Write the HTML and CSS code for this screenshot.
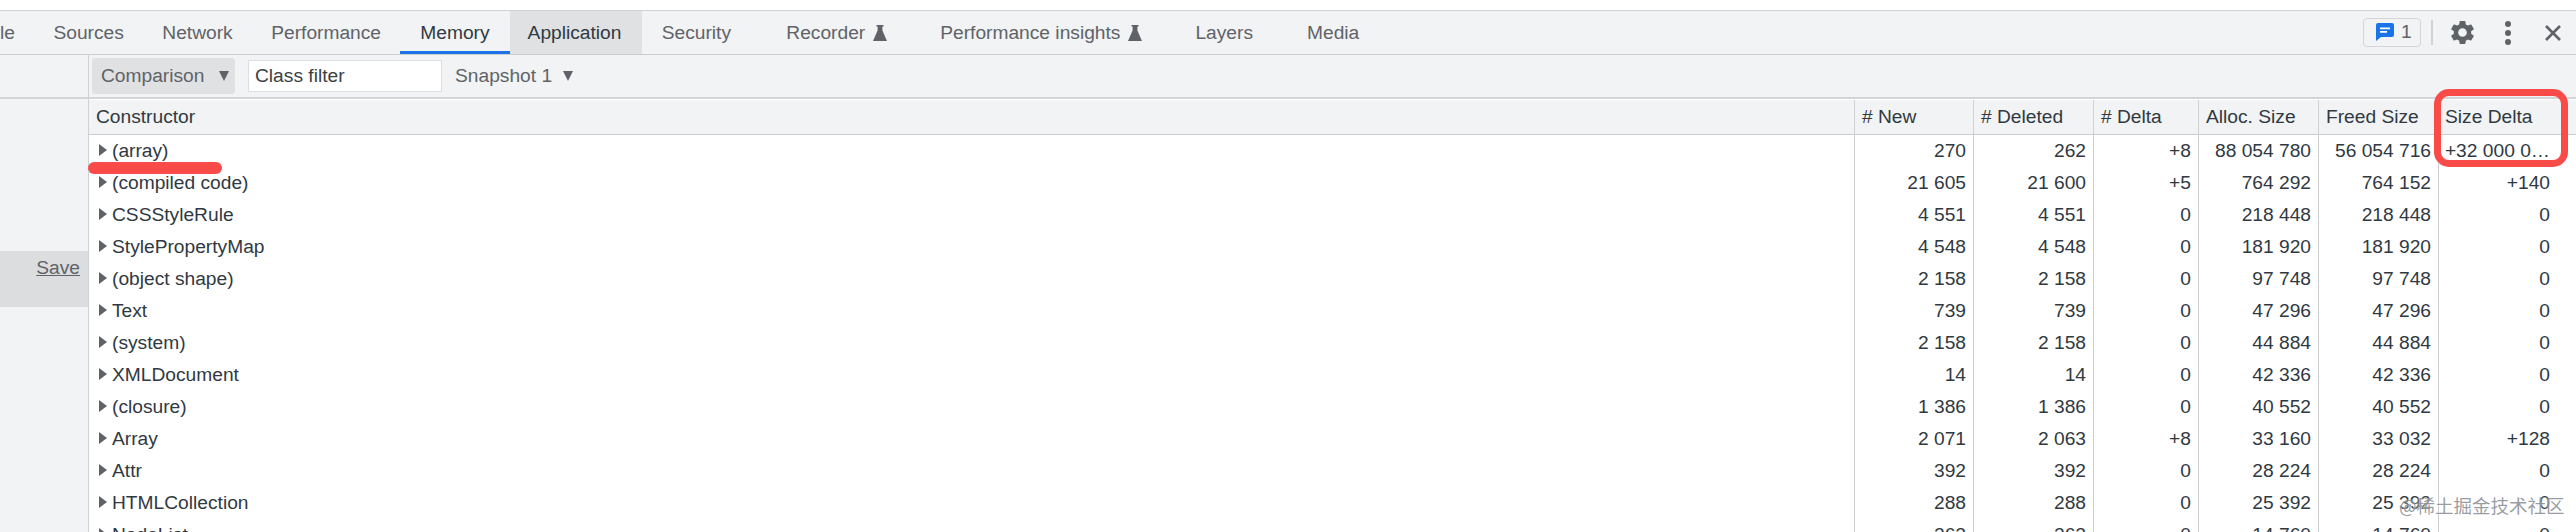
FILE: index.html
```html
<!DOCTYPE html>
<html lang="en">
<head>
<meta charset="utf-8">
<title>DevTools Memory</title>
<link rel="stylesheet" href="styles.css">
</head>
<body>
<div class="page">
  <div class="top-gap"></div>
  <header class="tabbar">
    <nav class="tabs">
      <span class="tab tab-cut">le</span>
      <span class="tab">Sources</span>
      <span class="tab">Network</span>
      <span class="tab">Performance</span>
      <span class="tab tab-current">Memory</span>
      <span class="tab tab-hover">Application</span>
      <span class="tab">Security</span>
      <span class="tab tab-wide tab-recorder">Recorder<svg class="flask" viewBox="0 0 14 16"><path d="M3.500 0h7v1.400H9.400v4.200L14 16H0L4.600 5.600V1.400H3.500z"/></svg></span>
      <span class="tab tab-wide">Performance insights<svg class="flask" viewBox="0 0 14 16"><path d="M3.500 0h7v1.400H9.400v4.200L14 16H0L4.600 5.600V1.400H3.500z"/></svg></span>
      <span class="tab tab-wide">Layers</span>
      <span class="tab tab-wide tab-media">Media</span>
    </nav>
    <div class="actions">
      <div class="issues">
        <svg class="issues-icon" viewBox="0 0 18 18"><path d="M2 0h14a2 2 0 0 1 2 2v10a2 2 0 0 1-2 2H5l-5 4V2a2 2 0 0 1 2-2z"/><path class="issues-lines" d="M4 4.500h10v1.800H4zM4 8h7v1.800H4z"/></svg>
        <span>1</span>
      </div>
      <span class="divider"></span>
      <svg class="gear" viewBox="0 0 24 24"><path d="M19.140 12.940c.04-.3.06-.61.06-.94 0-.32-.02-.64-.07-.94l2.030-1.580c.18-.14.23-.41.12-.61l-1.920-3.320c-.12-.22-.37-.29-.59-.22l-2.390.96c-.5-.38-1.030-.7-1.620-.94l-.36-2.540c-.04-.24-.24-.41-.48-.41h-3.840c-.24 0-.43.17-.47.41l-.36 2.540c-.59.24-1.130.57-1.620.94l-2.390-.96c-.22-.08-.47 0-.59.22L2.740 8.870c-.12.21-.08.47.12.61l2.030 1.580c-.05.3-.09.63-.09.94s.02.64.07.94l-2.030 1.580c-.18.14-.23.41-.12.61l1.920 3.320c.12.22.37.29.59.22l2.390-.96c.5.38 1.030.7 1.620.94l.36 2.540c.05.24.24.41.48.41h3.840c.24 0 .44-.17.47-.41l.36-2.540c.59-.24 1.130-.56 1.620-.94l2.390.96c.22.08.47 0 .59-.22l1.920-3.320c.12-.22.07-.47-.12-.61l-2.010-1.580zM12 15.600c-1.980 0-3.600-1.620-3.600-3.600s1.620-3.600 3.600-3.600 3.600 1.620 3.600 3.600-1.620 3.600-3.600 3.600z"/></svg>
      <svg class="dots" viewBox="0 0 8 26"><circle cx="4" cy="4" r="3"/><circle cx="4" cy="13" r="3"/><circle cx="4" cy="22" r="3"/></svg>
      <svg class="close" viewBox="0 0 16 16"><path d="M1 1l14 14M15 1L1 15"/></svg>
    </div>
  </header>

  <div class="toolbar">
    <div class="toolbar-side"></div>
    <div class="toolbar-main">
      <div class="select select-hover">Comparison<span class="caret"></span></div>
      <div class="filter">Class filter</div>
      <div class="select select-plain">Snapshot 1<span class="caret"></span></div>
    </div>
  </div>

  <div class="content">
    <aside class="side">
      <div class="save"><span class="save-link">Save</span></div>
    </aside>
    <main class="grid-wrap">
      <table class="grid">
        <colgroup>
          <col class="c-name"><col class="c-a"><col class="c-b"><col class="c-c"><col class="c-b"><col class="c-b"><col class="c-last">
        </colgroup>
        <thead>
          <tr><th>Constructor</th><th># New</th><th># Deleted</th><th># Delta</th><th>Alloc. Size</th><th>Freed Size</th><th>Size Delta</th></tr>
        </thead>
        <tbody>
          <tr><td class="name">(array)</td><td>270</td><td>262</td><td>+8</td><td>88 054 780</td><td>56 054 716</td><td>+32 000 0…</td></tr>
          <tr><td class="name">(compiled code)</td><td>21 605</td><td>21 600</td><td>+5</td><td>764 292</td><td>764 152</td><td>+140</td></tr>
          <tr><td class="name">CSSStyleRule</td><td>4 551</td><td>4 551</td><td>0</td><td>218 448</td><td>218 448</td><td>0</td></tr>
          <tr><td class="name">StylePropertyMap</td><td>4 548</td><td>4 548</td><td>0</td><td>181 920</td><td>181 920</td><td>0</td></tr>
          <tr><td class="name">(object shape)</td><td>2 158</td><td>2 158</td><td>0</td><td>97 748</td><td>97 748</td><td>0</td></tr>
          <tr><td class="name">Text</td><td>739</td><td>739</td><td>0</td><td>47 296</td><td>47 296</td><td>0</td></tr>
          <tr><td class="name">(system)</td><td>2 158</td><td>2 158</td><td>0</td><td>44 884</td><td>44 884</td><td>0</td></tr>
          <tr><td class="name">XMLDocument</td><td>14</td><td>14</td><td>0</td><td>42 336</td><td>42 336</td><td>0</td></tr>
          <tr><td class="name">(closure)</td><td>1 386</td><td>1 386</td><td>0</td><td>40 552</td><td>40 552</td><td>0</td></tr>
          <tr><td class="name">Array</td><td>2 071</td><td>2 063</td><td>+8</td><td>33 160</td><td>33 032</td><td>+128</td></tr>
          <tr><td class="name">Attr</td><td>392</td><td>392</td><td>0</td><td>28 224</td><td>28 224</td><td>0</td></tr>
          <tr><td class="name">HTMLCollection</td><td>288</td><td>288</td><td>0</td><td>25 392</td><td>25 392</td><td>0</td></tr>
          <tr><td class="name">NodeList</td><td>262</td><td>262</td><td>0</td><td>14 760</td><td>14 760</td><td>0</td></tr>
        </tbody>
      </table>
    </main>
  </div>

  <div class="mark-underline"></div>
  <div class="mark-box"></div>
  <div class="watermark">@稀土掘金技术社区</div>
</div>
</body>
</html>
```
FILE: styles.css
```css
* { box-sizing: border-box; }
html, body { margin: 0; padding: 0; background: #fff; }
body { font-family: "Liberation Sans", Arial, sans-serif; font-size: 19.200px; color: #303942; }
.page { position: relative; width: 2576px; height: 532px; overflow: hidden; display: flex; flex-direction: column; }

.top-gap { height: 10px; flex: none; background: #fff; }

.tabbar { flex: none; height: 45px; display: flex; justify-content: space-between; background: #f1f3f4; border-top: 1.500px solid #cfd1d3; border-bottom: 1.500px solid #cbcdcf; }
.tabs { display: flex; align-items: stretch; color: #5f6368; }
.tab { display: flex; align-items: center; padding: 0 19.250px; white-space: nowrap; }
.tab-cut { padding-left: 0; }
.tab-current { color: #303942; padding: 0 20px; box-shadow: inset 0 -3px 0 #1a73e8; }
.tab-hover { color: #303942; background: #dfe1e3; padding: 0 21px 0 18px; }
.tab-wide { padding: 0 26.500px; }
.tab-recorder { padding-left: 36px; }
.tab-media { padding-left: 27.500px; }
.flask { width: 14px; height: 16px; margin-left: 8px; fill: #5f6368; }

.actions { display: flex; align-items: center; padding-right: 15px; }
.issues { display: flex; align-items: center; height: 29px; width: 58px; padding-left: 12px; gap: 7px; border: 1.500px solid #d3d5d7; border-radius: 4px; color: #5f6368; margin-top: -1px; }
.issues-icon { width: 18px; height: 18px; fill: #1a73e8; }
.issues-lines { fill: #fff; }
.divider { width: 2px; height: 25px; background: #d0d2d4; margin: 0 12px 0 10px; }
.gear { width: 29px; height: 29px; fill: #5f6368; margin-left: 3px; }
.dots { width: 8px; height: 26px; fill: #5f6368; margin-left: 27px; }
.close { width: 16px; height: 16px; margin-left: 33px; stroke: #5f6368; stroke-width: 2.600; fill: none; }

.toolbar { flex: none; height: 44px; display: flex; background: #f1f3f4; border-bottom: 2px solid #d3d5d7; }
.toolbar-side { width: 89px; flex: none; border-right: 1.500px solid #cfd1d3; }
.toolbar-main { display: flex; align-items: center; padding-left: 3px; color: #5f6368; }
.select { display: flex; align-items: center; }
.select-hover { width: 143px; height: 36px; padding-left: 9px; background: #dfe1e3; border-radius: 3px; }
.select-hover .caret { margin-left: 15px; }
.select-plain { margin-left: 13px; }
.select-plain .caret { margin-left: 11px; }
.caret { width: 0; height: 0; border-left: 5px solid transparent; border-right: 5px solid transparent; border-top: 10px solid #5f6368; }
.filter { width: 194px; height: 32px; margin-left: 13px; padding-left: 6px; line-height: 30px; background: #fff; border: 1.500px solid #dcdee0; color: #3c4043; }

.content { flex: 1; display: flex; min-height: 0; padding-top: 1px; }
.side { width: 89px; flex: none; background: #f1f3f4; border-right: 1.500px solid #cfd1d3; padding-top: 152px; margin-top: -1px; }
.save { height: 56px; background: #dcdddf; text-align: right; padding: 6px 8px 0 0; }
.save-link { color: #5f6368; text-decoration: underline; }

.grid-wrap { flex: 1; min-width: 0; overflow: hidden; }
.grid { width: 2487px; table-layout: fixed; border-collapse: separate; border-spacing: 0; }
.c-name { width: 1765px; }
.c-a { width: 119px; }
.c-b { width: 120px; }
.c-c { width: 105px; }
.c-last { width: 138px; }
.grid th { height: 35px; padding: 0 0 0 7px; text-align: left; font-weight: 400; background: #f1f3f4; border-bottom: 1.500px solid #cbcdcf; border-left: 1px solid #d0d2d4; white-space: nowrap; overflow: hidden; }
.grid th:first-child { border-left: 0; }
.grid th:last-child { padding-left: 6px; }
.grid td { height: 32px; padding: 0 7px 0 0; text-align: right; border-left: 1px solid #cfcfcf; white-space: nowrap; overflow: hidden; }
.grid td:last-child { padding-right: 26px; }
.grid td.name { border-left: 0; text-align: left; padding: 0 0 0 23px; position: relative; }
.grid td.name::before { content: ""; position: absolute; left: 10px; top: 9px; width: 0; height: 0; border-left: 8px solid #5f6368; border-top: 6.500px solid transparent; border-bottom: 6.500px solid transparent; }

.mark-underline { position: absolute; left: 88px; top: 162px; width: 134px; height: 12px; border-radius: 6px; background: #f94c48; }
.mark-box { position: absolute; left: 2434px; top: 89px; width: 134px; height: 78px; border: 7px solid #f94c48; border-radius: 15px; }
.watermark { position: absolute; left: 2399px; top: 494px; font-family: "Noto Sans CJK SC", "Liberation Sans", sans-serif; font-size: 18.500px; line-height: 22px; color: rgba(120,124,130,.75); text-shadow: 0 0 2px #fff; white-space: nowrap; }
```
